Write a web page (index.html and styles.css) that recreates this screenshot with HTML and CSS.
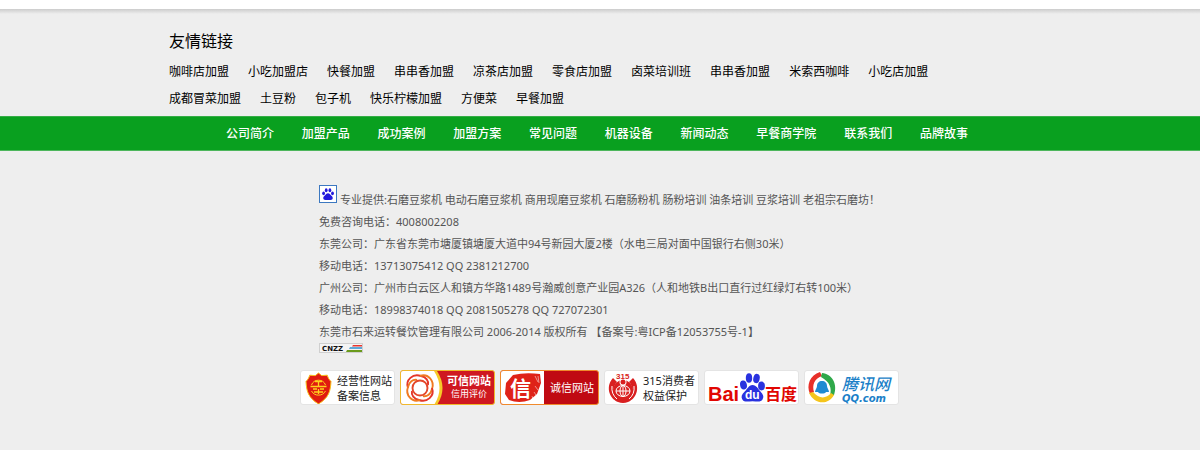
FILE: index.html
```html
<!DOCTYPE html>
<html lang="zh-CN">
<head>
  <meta charset="UTF-8" />
  <meta name="viewport" content="width=device-width, initial-scale=1.0" />
  <title>石来运转餐饮管理有限公司</title>
  <link rel="stylesheet" href="styles.css">
</head>
<body>
  <footer class="footer">
    <div class="friend-links">
      <h2>友情链接</h2>
      <ul>
        <li><a href="#">咖啡店加盟</a></li>
        <li><a href="#">小吃加盟店</a></li>
        <li><a href="#">快餐加盟</a></li>
        <li><a href="#">串串香加盟</a></li>
        <li><a href="#">凉茶店加盟</a></li>
        <li><a href="#">零食店加盟</a></li>
        <li><a href="#">卤菜培训班</a></li>
        <li><a href="#">串串香加盟</a></li>
        <li><a href="#">米索西咖啡</a></li>
        <li><a href="#">小吃店加盟</a></li>
        <li><a href="#">成都冒菜加盟</a></li>
        <li><a href="#">土豆粉</a></li>
        <li><a href="#">包子机</a></li>
        <li><a href="#">快乐柠檬加盟</a></li>
        <li><a href="#">方便菜</a></li>
        <li><a href="#">早餐加盟</a></li>
      </ul>
    </div>

    <nav class="footer-nav">
      <ul>
        <li><a href="#">公司简介</a></li>
        <li><a href="#">加盟产品</a></li>
        <li><a href="#">成功案例</a></li>
        <li><a href="#">加盟方案</a></li>
        <li><a href="#">常见问题</a></li>
        <li><a href="#">机器设备</a></li>
        <li><a href="#">新闻动态</a></li>
        <li><a href="#">早餐商学院</a></li>
        <li><a href="#">联系我们</a></li>
        <li><a href="#">品牌故事</a></li>
      </ul>
    </nav>

    <div class="footer-bottom">
      <div class="company">
        <p class="intro">
          <a class="tongji" href="#" aria-label="百度统计">
            <svg width="18" height="18" viewBox="0 0 18 18">
              <rect x="0.5" y="0.5" width="17" height="17" fill="#fff" stroke="#3c78c0" />
              <g fill="#2319dc">
                <ellipse cx="4.6" cy="8.3" rx="1.4" ry="1.9" />
                <ellipse cx="7.2" cy="5.2" rx="1.4" ry="2" />
                <ellipse cx="10.9" cy="5.2" rx="1.4" ry="2" />
                <ellipse cx="13.5" cy="8.3" rx="1.4" ry="1.9" />
                <path d="M9 8.2c1.500 0 2.200 1.300 3.200 2.300 1.200 1.100 1.900 2 1.400 3.300-.5 1.400-2.300 1.200-4.600 1.200s-4.100.2-4.600-1.200c-.5-1.300.2-2.200 1.400-3.300 1-1 1.700-2.300 3.200-2.300z" />
              </g>
            </svg>
          </a>
          <span>专业提供:石磨豆浆机 电动石磨豆浆机 商用现磨豆浆机 石磨肠粉机 肠粉培训 油条培训 豆浆培训 老祖宗石磨坊！</span>
        </p>
        <p>免费咨询电话：4008002208</p>
        <p>东莞公司：广东省东莞市塘厦镇塘厦大道中94号新园大厦2楼（水电三局对面中国银行右侧30米）</p>
        <p>移动电话：13713075412 QQ 2381212700</p>
        <p>广州公司：广州市白云区人和镇方华路1489号瀚威创意产业园A326（人和地铁B出口直行过红绿灯右转100米）</p>
        <p>移动电话：18998374018 QQ 2081505278 QQ 727072301</p>
        <p>东莞市石来运转餐饮管理有限公司 2006-2014 版权所有 【备案号:粤ICP备12053755号-1】</p>
        <a class="cnzz" href="#">
          <svg width="44" height="10" viewBox="0 0 44 10">
            <rect x="0.5" y="0.5" width="43" height="9" fill="#f4f4f4" stroke="#cfcfcf" />
            <text class="cnzz-text" x="3" y="8">CNZZ</text>
            <path d="M34 2h9v1.500h-10z" fill="#e8352e" />
            <path d="M31 4.300h12v1.500h-13z" fill="#2b8fd0" />
            <path d="M28 7h15v2h-16z" fill="#6a9a1c" />
          </svg>
        </a>
      </div>

      <ul class="badges">
        <li>
          <a class="badge" href="#">
            <svg width="34" height="34" viewBox="0 0 34 34">
              <path d="M17.500 2l3.200 2.600 5.600-.4c.6 2.500 2 4.600 3.700 6.200-.6 10-2 16-12.500 22.600C7 26.400 5.600 20.400 5 10.400c1.700-1.600 3.100-3.700 3.700-6.200l5.600.4z" fill="#e01b10" stroke="#f8c21c" />
              <path d="M10.500 14a7.500 7.500 0 0 1 14 0M10.500 20a8 8 0 0 0 14 0" fill="none" stroke="#ffd21f" />
              <path d="M14 10.500h7M17.500 10.500v5M9.500 15.500h16M12 18h4M19 18h4M13 21h9M17.500 18v5" fill="none" stroke="#ffd21f" stroke-width="1.300" />
            </svg>
            <span>经营性网站<br>备案信息</span>
          </a>
        </li>
        <li>
          <a class="badge badge-trust" href="#">
            <svg width="44" height="34" viewBox="0 0 44 34">
              <path d="M0 0h36q11 17 0 34H0z" fill="#f6c928" />
              <path d="M0 0h33q11 17 0 34H0z" fill="#fff" />
              <g fill="none" stroke-width="1.900">
                <path d="M7 17C4 9 12 2 20 5c5 1 8 5 7 9" stroke="#e4372a" />
                <path d="M19 5c8-3 15 5 12 13-1 5-5 8-9 7" stroke="#f07a22" />
                <path d="M31 17c3 8-5 15-13 12-5-1-8-5-7-9" stroke="#e4372a" />
                <path d="M19 29c-8 3-15-5-12-13 1-5 5-8 9-7" stroke="#f07a22" />
                <circle cx="19" cy="17" r="7.500" stroke="#e4472a" />
              </g>
            </svg>
            <span><b>可信网站</b><br>信用评价</span>
          </a>
        </li>
        <li>
          <a class="badge badge-honest" href="#">
            <svg width="43" height="34" viewBox="0 0 43 34">
              <rect width="43" height="34" fill="#fff" />
              <path d="M12 4Q24 1 39 3l1 9-4 11-7 6Q18 33 8 29l-4-6 1-11z" fill="#df2218" />
              <path d="M34 5l3 6M37 5l1 7M34 15l3 4M33 21l2 3M31 25l1 3" stroke="#fff" stroke-opacity=".5" />
              <text class="seal-text" x="9" y="25">信</text>
            </svg>
            <span>诚信网站</span>
          </a>
        </li>
        <li>
          <a class="badge" href="#">
            <svg width="36" height="34" viewBox="0 0 36 34">
              <path d="M8 7C1 14 3 27 13 31q5 2 10 0c10-4 12-17 5-24l-4 4c5 5 4 11-1 14H13c-5-3-6-9-1-14z" fill="#d91f20" />
              <circle cx="18" cy="19" r="10" fill="#d91f20" />
              <circle cx="18" cy="11" r="3.500" fill="#fff" />
              <circle cx="18" cy="11" r="2.500" fill="#d91f20" />
              <g fill="none" stroke="#fff">
                <ellipse cx="18" cy="20" rx="7" ry="5.500" />
                <ellipse cx="18" cy="20" rx="3" ry="5.500" />
                <path d="M11 20h14M18 14v12M7 15q-1 8 5 13M29 15q1 8-5 13" />
              </g>
              <text class="num-text" x="11" y="8">315</text>
            </svg>
            <span>315消费者<br>权益保护</span>
          </a>
        </li>
        <li>
          <a class="badge" href="#">
            <svg width="93" height="34" viewBox="0 0 93 34">
              <text class="baidu-text" x="3" y="30">Bai</text>
              <g fill="#2932df">
                <ellipse cx="38.500" cy="14" rx="3.400" ry="4.500" transform="rotate(-12 38.500 14)" />
                <ellipse cx="44" cy="7" rx="3.200" ry="4.700" />
                <ellipse cx="51.500" cy="7.500" rx="3.200" ry="4.700" transform="rotate(12 51.500 7.500)" />
                <ellipse cx="56.500" cy="15" rx="3.400" ry="4.400" />
                <path d="M47.500 14c4 0 5.500 4 8 6.500 3 3 3.500 5.500 2 8-1.800 3-5.500 1.700-10 1.700s-8 1.300-10-1.500c-1.800-2.700-.9-5.400 2-8 3-2.500 4-6.700 8-6.700z" />
              </g>
              <text class="du-text" x="40" y="28">du</text>
              <text class="baidu-cn" x="60" y="29">百度</text>
            </svg>
          </a>
        </li>
        <li>
          <a class="badge" href="#">
            <svg width="93" height="34" viewBox="0 0 93 34">
              <path d="M15 1C5 4 1 14 5 23l4-2C7 14 9 8 17 5z" fill="#e7302a" />
              <path d="M17 2c10 1 16 11 12 22l-4 1c2-8 0-14-9-19z" fill="#2fa84a" />
              <path d="M4 22c5 11 19 13 25 2l-3-2c-5 6-12 6-18-1z" fill="#f5c51c" />
              <path d="M17 10c3 0 5 2 5 5 0 2 2 4 2 6h-3c-1 2-7 2-8 0h-3c0-2 2-4 2-6 0-3 2-5 5-5z" fill="#1f8ad2" />
              <text class="qq-cn" x="37" y="19">腾讯网</text>
              <text class="qq-com" x="37" y="31">QQ.com</text>
            </svg>
          </a>
        </li>
      </ul>
    </div>
  </footer>
</body>
</html>
```
FILE: styles.css
```css
* { box-sizing: border-box; }
body { margin: 0; background: #eee; font-family: "Noto Sans", "Noto Sans CJK SC", sans-serif; font-size: 12px; color: #000; }
h2, p, ul { margin: 0; padding: 0; }
ul { list-style: none; }
a { color: inherit; text-decoration: none; }
svg { display: block; flex: none; }

.footer { border-top: 9px solid #fff; background: linear-gradient(#ccc, #eee 5px); padding-bottom: 40px; }

.friend-links { max-width: 862px; margin: 0 auto; padding: 20px 60px 4px 0; }
.friend-links h2 { font-size: 16px; font-weight: normal; line-height: 24px; margin-bottom: 5px; }
.friend-links ul { display: flex; flex-wrap: wrap; column-gap: 19px; }
.friend-links li { line-height: 27px; }

.footer-nav { background: #09a01f; border-top: 1px solid #35ad46; border-bottom: 1px solid #4db65c; color: #fff; }
.footer-nav ul { display: flex; justify-content: space-between; max-width: 748px; margin: 0 auto; padding-right: 6px; }
.footer-nav li { line-height: 33px; font-weight: 500; }

.footer-bottom { max-width: 600px; margin: 0 auto; padding-top: 34px; }
.company { padding-left: 19px; font-size: 11px; line-height: 22px; color: #555; white-space: nowrap; }
.intro { display: flex; align-items: flex-start; gap: 3px; }
.intro span { padding-top: 4px; }
.cnzz { display: block; width: 44px; }
.cnzz-text { font: bold 7px "DejaVu Sans", sans-serif; fill: #111; }

.badges { display: flex; gap: 5px; margin-top: 17px; }
.badge { display: flex; align-items: center; width: 95px; height: 35px; background: #fff; border: 1px solid #e4e4e4; border-radius: 3px; overflow: hidden; font-size: 11px; line-height: 15px; color: #222; white-space: nowrap; }
.badge span { margin-left: 2px; }
.badge-trust { background: #cf1820; border-color: #f0b92c; color: #fff; font-size: 9px; line-height: 12px; text-align: center; }
.badge-trust b { font-size: 11px; }
.badge-honest { width: 99px; background: #c00a12; border-color: #f08a2c; color: #fff; }
.badge-honest span { margin-left: 6px; }
.seal-text { font: bold 21px "Noto Sans CJK SC", sans-serif; fill: #fff; }
.num-text { font: bold 8px "Liberation Sans", sans-serif; fill: #d91f20; }
.baidu-text { font: bold 20px "Liberation Sans", sans-serif; fill: #e10602; }
.baidu-cn { font: bold 16px "Noto Sans CJK SC", sans-serif; fill: #e10602; }
.du-text { font: bold 12px "Liberation Sans", sans-serif; fill: #fff; }
.qq-cn { font: italic 500 16px "Noto Sans CJK SC", sans-serif; fill: #1b7fc8; }
.qq-com { font: italic bold 10px "DejaVu Sans", sans-serif; fill: #1b7fc8; }
```
